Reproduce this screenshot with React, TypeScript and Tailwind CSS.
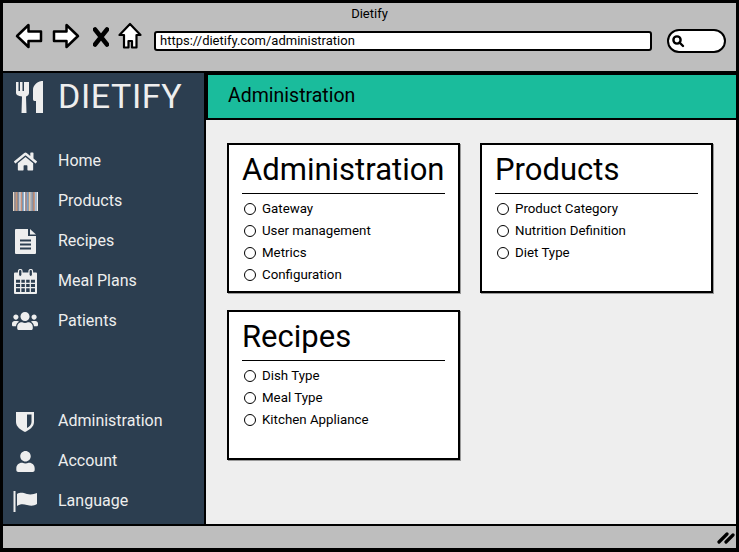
import { FaHome, FaUsers, FaUser } from "react-icons/fa";

const stripes = ["#eadbc9","#9a8f95","#d9a27e","#7f8fa6","#e7e7e7","#c98f7a","#8fb4d6","#eeeeee","#a58b8f","#7fa7cf","#e5c3a0","#d0d0d0","#8a94a6","#e0a080","#9fc0e0","#eeeeee"];

function Barcode() {
  return (
    <svg width="25" height="19" viewBox="0 0 25 19">
      {stripes.map((c, i) => <rect key={i} x={i * 1.5625} y="0" width="1.5625" height="19" fill={c} />)}
    </svg>
  );
}

function Doc() {
  return (
    <svg width="21" height="25" viewBox="0 0 21 25">
      <path d="M1 0h12v7h8v17a1 1 0 0 1-1 1H1a1 1 0 0 1-1-1V1a1 1 0 0 1 1-1z" fill="#eeeeee" />
      <path d="M15 0l6 5.500h-6z" fill="#eeeeee" />
      <path d="M5 11.500h11M5 15.500h11M5 19.500h11" stroke="#2c3e50" strokeWidth="2" />
    </svg>
  );
}

function Calendar() {
  return (
    <svg width="23" height="25" viewBox="0 0 23 25">
      <path d="M1 3.500h21a1 1 0 0 1 1 1V24a1 1 0 0 1-1 1H1a1 1 0 0 1-1-1V4.500a1 1 0 0 1 1-1z" fill="#eeeeee" />
      <path d="M2 10h19v13H2z" fill="#2c3e50" />
      <path d="M2 10h19M2 14.300h19M2 18.600h19M6.700 10v13M11.500 10v13M16.300 10v13" stroke="#eeeeee" strokeWidth="1.300" />
      <rect x="4.500" y="0.500" width="3.500" height="7" rx="1.700" fill="#2c3e50" stroke="#eeeeee" strokeWidth="1.200" />
      <rect x="15" y="0.500" width="3.500" height="7" rx="1.700" fill="#2c3e50" stroke="#eeeeee" strokeWidth="1.200" />
    </svg>
  );
}

function Flag() {
  return (
    <svg width="25" height="21" viewBox="0 0 25 21">
      <rect x="0.500" y="0" width="2" height="21" fill="#eeeeee" />
      <path d="M4 3c4-2 6-1 10 0s7 0 10-1v11c-3 2-6 2-10 1s-7-1-10 1z" fill="#eeeeee" />
    </svg>
  );
}

function Shield() {
  return (
    <svg width="18" height="21" viewBox="0 0 18 21">
      <path d="M0 1h18v10c0 5-5 8-9 10C5 19 0 16 0 11z" fill="#eeeeee" />
      <path d="M11 3.500h4.500V11c0 3-2.500 4.800-4.500 6z" fill="#2c3e50" />
    </svg>
  );
}

function Cutlery() {
  return (
    <svg width="27" height="32" viewBox="0 0 27 32">
      <path d="M0 1h2.500v9h1.500V1h2.500v9h1.500V1H11v2.500V1h2v11c0 2-1.500 3-3 3.500L10.500 32h-5l.5-16.500C2 15 0 14 0 12z" fill="#eeeeee" />
      <path d="M17 9c0-4 3-8 8.500-9H27v32h-7V20h-1.500c-1 0-1.500-1-1.500-2z" fill="#eeeeee" />
    </svg>
  );
}

function Arrow({ flip }: { flip?: boolean }) {
  return (
    <svg width="28" height="26" viewBox="0 0 28 26" className={flip ? "-scale-x-100" : ""}>
      <path d="M2 13 13.500 2v6.500H26v9.500H13.500V24z" fill="#fff" stroke="#000" strokeWidth="2.500" strokeLinejoin="round" />
    </svg>
  );
}

function CloseX() {
  return (
    <svg width="16" height="20" viewBox="0 0 16 20">
      <path d="M2 2.500 14 17.500M14 2.500 2 17.500" stroke="#000" strokeWidth="4.500" strokeLinecap="round" />
    </svg>
  );
}

function HomeOutline() {
  return (
    <svg width="24" height="28" viewBox="0 0 24 28">
      <path d="M12 2 1.500 13H6v12.500h4.500V19h3.500v6.500h4.500V13h4z" fill="#fff" stroke="#000" strokeWidth="2.200" strokeLinejoin="round" />
    </svg>
  );
}

function SearchGlass() {
  return (
    <svg width="14" height="14" viewBox="0 0 14 14">
      <circle cx="6" cy="6" r="3.600" fill="none" stroke="#000" strokeWidth="2.400" />
      <path d="M8.500 8.500 12 12" stroke="#000" strokeWidth="2.400" strokeLinecap="round" />
    </svg>
  );
}

function Grip() {
  return (
    <svg width="18" height="14" viewBox="0 0 18 14">
      <path d="M2 12 10 4M9 12 16 5" stroke="#000" strokeWidth="3.200" strokeLinecap="round" />
    </svg>
  );
}

function NavRow({ icon, label }: { icon: React.ReactNode; label: string }) {
  return (
    <div className="flex h-10 items-center">
      <div className="flex w-[44px] shrink-0 items-center justify-center">{icon}</div>
      <span className="ml-[11px] text-[16px]">{label}</span>
    </div>
  );
}

function Card({ title, items }: { title: string; items: string[] }) {
  return (
    <div className="h-[150px] w-[233px] border-2 border-black bg-white px-[13px] pt-[6px] shadow-[1px_1px_0_#999]">
      <h2 className="text-[31px] leading-[38px]">{title}</h2>
      <div className="mt-[4px] h-[1px] w-[203px] bg-black" />
      <ul className="mt-[3.500px]">
        {items.map((t) => (
          <li key={t} className="flex h-[22px] items-center gap-[6px] pl-[2px]">
            <span className="h-[12px] w-[12px] rounded-full border-[1.500px] border-black" />
            <span className="text-[13.300px]">{t}</span>
          </li>
        ))}
      </ul>
    </div>
  );
}

export default function App() {
  return (
    <div className="flex h-[552px] w-[739px] flex-col overflow-hidden border-[3px] border-b-[4px] border-black bg-[#bebebe] font-['Roboto',sans-serif] text-black">
      <div className="h-[70px] shrink-0 border-b-2 border-black">
        <div className="pt-[3px] text-center text-[13px] leading-[16px]">Dietify</div>
        <div className="flex items-start pl-[12px]">
          <div className="mt-[1px] flex items-center gap-[9px]">
            <Arrow />
            <Arrow flip />
          </div>
          <div className="ml-[13px] mt-[5px]"><CloseX /></div>
          <div className="ml-[9px]"><HomeOutline /></div>
          <div className="ml-[12px] mt-[9px] flex h-[20px] w-[498px] items-center rounded-[3px] border-2 border-black bg-white pl-[4px] text-[13px]">
            https://dietify.com/administration
          </div>
          <div className="ml-[15px] mt-[7px] flex h-[24px] w-[59px] items-center rounded-full border-2 border-black bg-white pl-[2px]">
            <SearchGlass />
          </div>
        </div>
      </div>
      <div className="flex min-h-0 flex-1">
        <aside className="flex w-[203px] shrink-0 flex-col border-r-2 border-black bg-[#2c3e50] text-[#eeeeee]">
          <div className="flex h-[47px] items-center pl-[13px]">
            <Cutlery />
            <span className="ml-[15px] text-[34px] tracking-[0.6px]">DIETIFY</span>
          </div>
          <div className="mt-[21px]">
            <NavRow icon={<FaHome size={23} />} label="Home" />
            <NavRow icon={<Barcode />} label="Products" />
            <NavRow icon={<Doc />} label="Recipes" />
            <NavRow icon={<Calendar />} label="Meal Plans" />
            <NavRow icon={<FaUsers size={26} />} label="Patients" />
          </div>
          <div className="mt-[60px]">
            <NavRow icon={<Shield />} label="Administration" />
            <NavRow icon={<FaUser size={21} />} label="Account" />
            <NavRow icon={<Flag />} label="Language" />
          </div>
        </aside>
        <main className="flex min-w-0 flex-1 flex-col bg-[#eeeeee]">
          <div className="flex h-[47px] shrink-0 items-center border-y-2 border-l-2 border-black bg-[#1abc9c] pb-[2px] pl-[20px] text-[19.500px]">
            Administration
          </div>
          <div className="grid grid-cols-[233px_233px] gap-x-[20px] gap-y-[17px] pl-[21px] pt-[23px]">
            <Card title="Administration" items={["Gateway", "User management", "Metrics", "Configuration"]} />
            <Card title="Products" items={["Product Category", "Nutrition Definition", "Diet Type"]} />
            <Card title="Recipes" items={["Dish Type", "Meal Type", "Kitchen Appliance"]} />
          </div>
        </main>
      </div>
      <div className="flex h-[24px] shrink-0 items-center justify-end border-t-2 border-black pr-[1px]">
        <Grip />
      </div>
    </div>
  );
}
